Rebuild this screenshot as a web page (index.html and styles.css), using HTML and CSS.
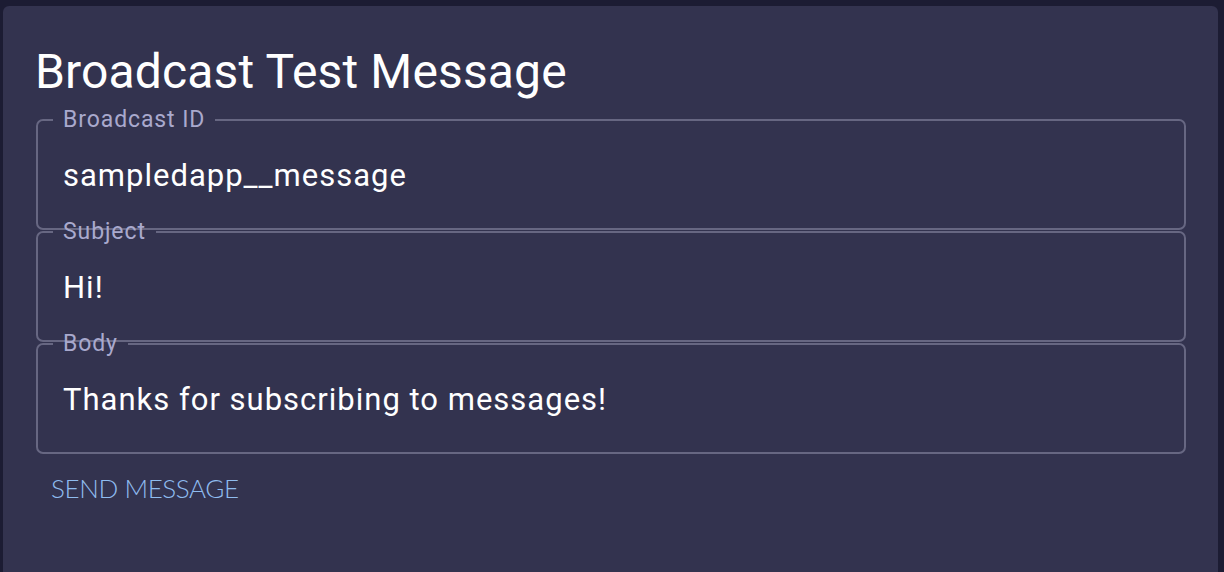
FILE: index.html
```html
<!DOCTYPE html>
<html lang="en">
<head>
<meta charset="utf-8">
<title>Broadcast Test Message</title>
<link rel="stylesheet" href="styles.css">
</head>
<body>
<main class="card">
  <h1 class="title">Broadcast Test Message</h1>
  <form class="form">
    <fieldset class="field">
      <legend class="field-label">Broadcast ID</legend>
      <div class="field-value">sampledapp__message</div>
    </fieldset>
    <fieldset class="field">
      <legend class="field-label">Subject</legend>
      <div class="field-value">Hi!</div>
    </fieldset>
    <fieldset class="field">
      <legend class="field-label">Body</legend>
      <div class="field-value">Thanks for subscribing to messages!</div>
    </fieldset>
    <button type="button" class="send-btn">SEND MESSAGE</button>
  </form>
</main>
</body>
</html>
```

FILE: styles.css
```css
html, body {
  margin: 0;
  padding: 0;
  height: 100%;
  overflow: hidden;
}

body {
  background: #1c1c33;
  font-family: Roboto, "Liberation Sans", sans-serif;
  padding: 6px 6px 0 3px;
  box-sizing: border-box;
}

.card {
  background: #33334f;
  border-radius: 6px 6px 0 0;
  height: 100%;
  padding: 39px 32px 0 33px;
  box-sizing: border-box;
}

.title {
  margin: 0 0 8px -1px;
  font-size: 48px;
  line-height: 54px;
  font-weight: 400;
  letter-spacing: 0.15px;
  color: #ffffff;
}

.form {
  display: flex;
  flex-direction: column;
}

.field {
  margin: 0;
  padding: 0 25px 11px 25px;
  border: 2px solid #676782;
  border-radius: 7px;
  min-width: 0;
}

.field + .field {
  margin-top: -11px;
}

.field-label {
  margin-left: -10px;
  padding: 0 10px;
  font-size: 23px;
  line-height: 26px;
  letter-spacing: 0.9px;
  color: #a9a9cd;
}

.field-value {
  height: 84px;
  display: flex;
  align-items: center;
  font-size: 31px;
  letter-spacing: 1px;
  color: #ffffff;
}

.send-btn {
  align-self: flex-start;
  margin: 16px 0 0 15px;
  padding: 0;
  background: none;
  border: none;
  font-family: Lato, "Open Sans", sans-serif;
  font-weight: 300;
  font-size: 26px;
  line-height: 36px;
  letter-spacing: -0.4px;
  color: #8fbcef;
  cursor: pointer;
}
```
